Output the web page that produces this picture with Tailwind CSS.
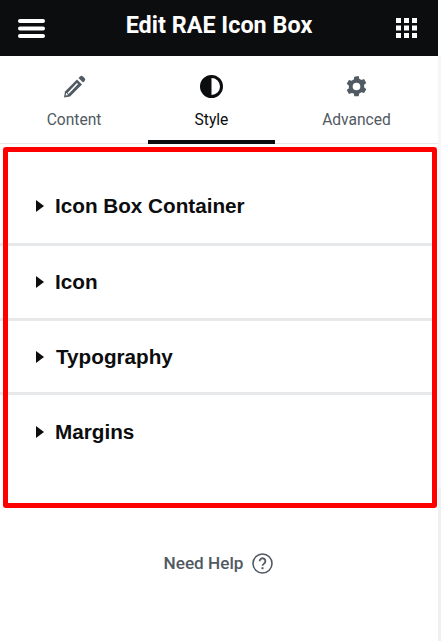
<!DOCTYPE html>
<html lang="en">
<head>
    <meta charset="UTF-8">
    <title>Edit RAE Icon Box</title>
    <script src="https://cdn.jsdelivr.net/npm/@tailwindcss/browser@4"></script>
</head>
<body class="bg-white h-[641px] w-[441px] overflow-hidden font-['Roboto',sans-serif] flex">
    <div class="w-[438px] h-[641px] shrink-0 bg-white">
        <header class="h-14 bg-[#0c0d0e] flex items-center justify-between pl-[18px] pr-[21px]">
            <svg class="w-[27px] h-[19px]" viewBox="0 0 27 19" fill="#fff">
                <rect y="0" width="27" height="4" rx="2"/>
                <rect y="7.5" width="27" height="4" rx="2"/>
                <rect y="15" width="27" height="4" rx="2"/>
            </svg>
            <h1 class="text-white font-bold text-[23.4px] leading-none mb-1 mr-[3px]">Edit RAE Icon Box</h1>
            <svg class="w-[21px] h-[20px]" viewBox="0 0 21 20" fill="#fff">
                <rect x="0" y="0" width="5" height="5"/><rect x="8" y="0" width="5" height="5"/><rect x="16" y="0" width="5" height="5"/>
                <rect x="0" y="7.5" width="5" height="5"/><rect x="8" y="7.5" width="5" height="5"/><rect x="16" y="7.5" width="5" height="5"/>
                <rect x="0" y="15" width="5" height="5"/><rect x="8" y="15" width="5" height="5"/><rect x="16" y="15" width="5" height="5"/>
            </svg>
        </header>

        <nav class="h-[88px] flex border-b border-[#e6e8ea] text-[15.6px]">
            <div class="w-[148px] flex flex-col items-center pt-[19px] text-[#515962]">
                <svg class="w-[23px] h-[23px]" viewBox="0 0 23 23" fill="#515962">
                    <path d="M14 4.5l5 5L7 21.5l-6 1 1-6z"/>
                    <path d="M15.5 3l1.6-1.6a2 2 0 0 1 2.8 0l1.7 1.7a2 2 0 0 1 0 2.8L20 7.5z"/>
                    <path d="M5 18.5l9.5-10" stroke="#fff" stroke-width="1.6" fill="none"/>
                    <path d="M2.6 20.4l.5-2.6 2.1 2.1z" fill="#fff"/>
                </svg>
                <span class="mt-[13px] leading-[19px]">Content</span>
            </div>
            <div class="w-[127px] flex flex-col items-center pt-[19px] text-[#0c0d0e] relative">
                <svg class="w-[23px] h-[23px]" viewBox="0 0 23 23">
                    <circle cx="11.5" cy="11.5" r="10" fill="#fff" stroke="#0c0d0e" stroke-width="3"/>
                    <path d="M11.5 1.5a10 10 0 0 0 0 20z" fill="#0c0d0e"/>
                </svg>
                <span class="mt-[13px] leading-[19px]">Style</span>
                <div class="absolute left-0 right-0 bottom-[-1px] h-1 bg-[#0c0d0e]"></div>
            </div>
            <div class="flex-1 flex flex-col items-center pt-[19px] text-[#515962]">
                <svg class="w-[23px] h-[23px]" viewBox="0 0 24 24" fill="#515962">
                    <path fill-rule="evenodd" d="M14.3 1l.5 3a8.5 8.5 0 0 1 2.2 1.3l2.9-1 2.3 4-2.3 2a8.5 8.5 0 0 1 0 2.6l2.3 2-2.3 4-2.9-1a8.5 8.5 0 0 1-2.2 1.3l-.5 3H9.7l-.5-3A8.5 8.5 0 0 1 7 18.7l-2.9 1-2.3-4 2.3-2a8.5 8.5 0 0 1 0-2.6l-2.3-2 2.3-4 2.9 1a8.5 8.5 0 0 1 2.2-1.3l.5-3zM12 8a4 4 0 1 0 0 8 4 4 0 0 0 0-8z"/>
                </svg>
                <span class="mt-[13px] leading-[19px]">Advanced</span>
            </div>
        </nav>

        <section class="mt-[3px] ml-[3px] w-[434px] h-[361px] border-[5px] border-[#ff0000] rounded-[3px] font-['Liberation_Sans',sans-serif] font-bold text-[20.7px] text-[#0c0d0e]">
            <div class="relative h-[94px] pt-[42px] flex items-start border-b-[3px] border-[#e6e8ea] pl-[28px]">
                <i class="absolute left-[-8px] bottom-[-3px] w-[3px] h-[3px] bg-[#e6e8ea]"></i>
                <span class="mt-[6px] mr-[11px] w-0 h-0 border-y-[6px] border-y-transparent border-l-[8px] border-l-[#0c0d0e]"></span>
                <span class="leading-[24px]">Icon Box Container</span>
            </div>
            <div class="relative h-[75px] pt-[24px] flex items-start border-b-[3px] border-[#e6e8ea] pl-[28px]">
                <i class="absolute left-[-8px] bottom-[-3px] w-[3px] h-[3px] bg-[#e6e8ea]"></i>
                <span class="mt-[6px] mr-[11px] w-0 h-0 border-y-[6px] border-y-transparent border-l-[8px] border-l-[#0c0d0e]"></span>
                <span class="leading-[24px]">Icon</span>
            </div>
            <div class="relative h-[74px] pt-[24px] flex items-start border-b-[3px] border-[#e6e8ea] pl-[28px]">
                <i class="absolute left-[-8px] bottom-[-3px] w-[3px] h-[3px] bg-[#e6e8ea]"></i>
                <span class="mt-[6px] mr-[12px] w-0 h-0 border-y-[6px] border-y-transparent border-l-[8px] border-l-[#0c0d0e]"></span>
                <span class="leading-[24px]">Typography</span>
            </div>
            <div class="pt-[25px] flex items-start pl-[28px]">
                <span class="mt-[6px] mr-[11px] w-0 h-0 border-y-[6px] border-y-transparent border-l-[8px] border-l-[#0c0d0e]"></span>
                <span class="leading-[24px]">Margins</span>
            </div>
        </section>

        <div class="mt-[43px] pr-[2px] flex items-center justify-center gap-2 text-[17.2px] font-medium text-[#515962]">
            <span class="leading-[24px]">Need Help</span>
            <svg class="w-[21px] h-[21px]" viewBox="0 0 21 21" fill="none">
                <circle cx="10.5" cy="10.5" r="9.5" stroke="#515962" stroke-width="1.6"/>
                <path d="M7.6 8.2a2.9 2.9 0 1 1 4.5 2.4c-1 .7-1.6 1.1-1.6 2.2" stroke="#515962" stroke-width="1.8"/>
                <rect x="9.5" y="14.2" width="2" height="2" fill="#515962"/>
            </svg>
        </div>
    </div>
    <div class="w-[3px] h-[641px] flex flex-col">
        <div class="h-[56px] bg-white"></div>
        <div class="h-[432px] bg-[#f6f6f7]"></div>
        <div class="flex-1 bg-[#eff0f1]"></div>
    </div>
</body>
</html>
